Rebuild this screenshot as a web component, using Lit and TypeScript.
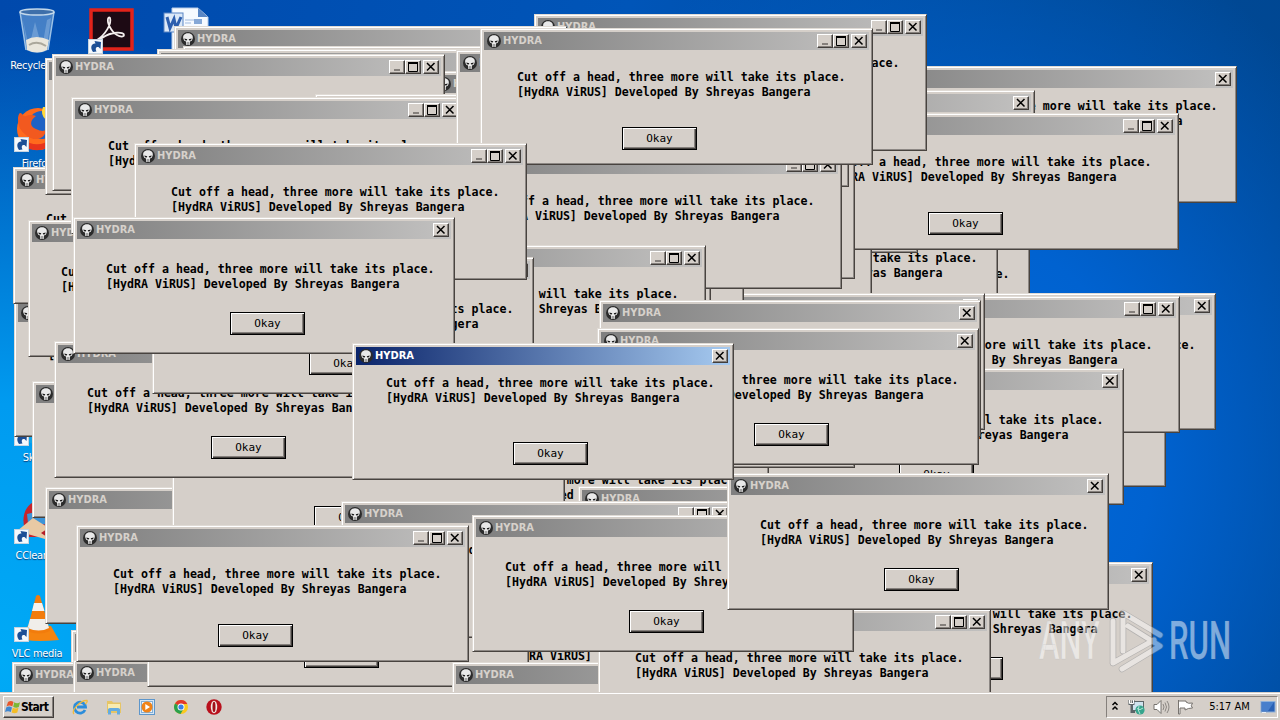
import { LitElement, css, html, svg } from "lit";
import { customElement, property } from "lit/decorators.js";

type Kind = "dialog" | "sizable" | "raised";
type Win = [number, number, Kind];

// back to front
const WINDOWS: Win[] = [
    [14, 300, "raised"],
    [13, 167, "dialog"],
    [28, 220, "dialog"],
    [32, 381, "dialog"],
    [45, 487, "dialog"],
    [71, 630, "dialog"],
    [855, 66, "raised"],
    [653, 90, "dialog"],
    [648, 222, "dialog"],
    [616, 206, "dialog"],
    [525, 116, "sizable"],
    [479, 170, "sizable"],
    [786, 113, "sizable"],
    [473, 142, "dialog"],
    [834, 293, "dialog"],
    [784, 350, "dialog"],
    [787, 296, "sizable"],
    [742, 368, "dialog"],
    [376, 431, "sizable"],
    [473, 331, "dialog"],
    [603, 293, "dialog"],
    [327, 180, "sizable"],
    [351, 170, "sizable"],
    [318, 190, "sizable"],
    [534, 14, "sizable"],
    [174, 26, "sizable"],
    [183, 46, "dialog"],
    [157, 49, "sizable"],
    [430, 71, "sizable"],
    [45, 58, "sizable"],
    [52, 54, "sizable"],
    [315, 94, "sizable"],
    [71, 97, "sizable"],
    [456, 50, "sizable"],
    [449, 152, "sizable"],
    [480, 28, "sizable"],
    [313, 245, "sizable"],
    [599, 300, "dialog"],
    [597, 328, "dialog"],
    [172, 407, "sizable"],
    [54, 341, "dialog"],
    [152, 257, "dialog"],
    [134, 143, "sizable"],
    [73, 217, "dialog"],
    [578, 486, "dialog"],
    [464, 592, "sizable"],
    [12, 662, "dialog"],
    [73, 660, "dialog"],
    [147, 550, "dialog"],
    [341, 501, "sizable"],
    [452, 662, "sizable"],
    [771, 562, "dialog"],
    [598, 609, "sizable"],
    [76, 525, "sizable"],
    [472, 515, "dialog"],
    [727, 473, "dialog"],
];

const arrow = svg`
    <g transform="translate(1 32)">
        <rect x=".5" y=".5" width="14" height="14" fill="#f4f8fc" stroke="#c5d3e0"/>
        <path d="M5 13 C1.500 8 4 4 7.500 4.500 L6.500 2 L13 3 L12.500 10 L10.500 8 C8 7.500 7 9.500 8.500 12.500 Z" fill="#1c4f96"/>
    </g>`;

const ICONS: Record<string, unknown> = {
    bin: svg`
        <g transform="translate(2 1)">
            <path d="M5 3 L11 42 Q23 48 33 42 L39 3 Z" fill="#5b92cf" fill-opacity=".75"/>
            <path d="M8 12 L14 40 L20 14 L27 40 L32 12 L36 10 L32 38 L12 40 Z" fill="#c4dcf2" fill-opacity=".3"/>
            <path d="M11 32 Q21 26 34 32 L32 42 Q22 47 12 42 Z" fill="#e9e6dc"/>
            <path d="M14 37 Q22 32 31 38" fill="none" stroke="#aaa79b" stroke-width="2"/>
            <path d="M5 4 L11 42 M39 4 L33 42" stroke="#9dc2e6" stroke-width="1.500"/>
            <ellipse cx="22" cy="4" rx="17" ry="3" fill="#3e6faa" stroke="#c3d8ea" stroke-width="1.500"/>
        </g>`,
    acrobat: svg`
        <rect x="4" y="3" width="41" height="39" fill="#1d0a14" stroke="#e2231a" stroke-width="3.500"/>
        <path d="M10 33 C18 28 25 17 23 11 C21 9 19 14 24 22 C29 30 37 31 37 28 C37 25 25 24 15 31 C11 34 9 35 10 33Z"
            fill="none" stroke="#f4eeee" stroke-width="1.800"/>${arrow}`,
    word: svg`
        <path d="M11 1 H37 L47 10 V44 H11 Z" fill="#f6faff" stroke="#b7cbe6"/>
        <path d="M37 1 V10 H47 Z" fill="#5a87c5"/>
        <path d="M24 13 H41 M24 16 H30 M24 20 H41" stroke="#9fb9de"/>
        <rect x="33" y="12" width="8" height="5" fill="#86a8d6"/>
        <rect x="3" y="6" width="19" height="19" fill="#dce9f8" stroke="#5984c4"/>
        <path d="M6 10 L9 21 L13 12 L15 21 L20 10" fill="none" stroke="#2e5fae" stroke-width="3"/>`,
    firefox: svg`
        <circle cx="25" cy="24" r="21" fill="#ff6a1d"/>
        <circle cx="29" cy="20" r="14" fill="#1f62c4"/>
        <path d="M30 2 C40 2 48 12 46 25 L33 15 Q27 10 30 2Z" fill="#ffd93a"/>
        <path d="M5 13 Q6 6 9 9 Q11 12 13 11 Q18 9 23 11 C16 16 17 22 23 24 Q31 28 33 24 C33 34 22 37 14 31 Q4 24 5 13Z" fill="#f2591f"/>
        <path d="M8 36 Q24 49 42 35" fill="none" stroke="#e8341c" stroke-width="6"/>${arrow}`,
    skype: svg`<circle cx="24" cy="24" r="21" fill="#12a5e8"/>${arrow}`,
    ccleaner: svg`
        <path d="M30 2 C10 4 6 24 15 40 H46 V2 Z" fill="#c7242c"/>
        <path d="M14 17 L40 11 V28 L15 26Z" fill="#3d94d8"/>
        <path d="M4 34 L20 21 L39 33 L32 42 Z" fill="#e8c9a4"/>
        <path d="M28 36 L40 28 V44 Z" fill="#b51d27"/>${arrow}`,
    vlc: svg`
        <path d="M9 36 L15 31 H38 L46 45 Q24 47 13 45Z" fill="#f58410"/>
        <path d="M23 1 Q25 -1 27 1 L37 36 Q26 41 14 36 Z" fill="#f27c0c"/>
        <path d="M21 8 H29 L31.500 16 H19 Z" fill="#f6f3ef"/>
        <path d="M17 24 H33.500 L36 33 Q26 38 14.500 33 Z" fill="#f0eeea"/>${arrow}`,
};

const SHORTCUTS: [string, string][][] = [
    [
        ["bin", "Recycle Bin"],
        ["firefox", "Firefox"],
        ["skype", ""],
        ["skype", ""],
        ["skype", "Skype"],
        ["ccleaner", "CCleaner"],
        ["vlc", "VLC media"],
    ],
    [["acrobat", ""]],
    [["word", ""]],
];

@customElement("hydra-window")
export class HydraWindow extends LitElement {

    @property({ reflect: true }) kind: Kind = "dialog";
    @property({ type: Boolean, reflect: true }) active = false;

    static styles = css`
        :host{
            --text-x: 33px;
            --text-y: 23px;
            --button-x: 157px;
            --button-gap: 20px;
            display: block;
            box-sizing: border-box;
            width: 382px;
            height: 137px;
            padding: 3px;
            background: #d5cfc9;
            border: 1px solid;
            border-color: #e0dbd5 #48433f #48433f #e0dbd5;
            box-shadow: inset 1px 1px #fff, inset -1px -1px #8d8884;
            color: #000;
        }
        :host([kind="sizable"]){
            --text-x: 37px;
            --text-y: 20px;
            --button-x: 142px;
            --button-gap: 27px;
            width: 393px;
        }
        :host([kind="raised"]){
            --text-x: 34px;
            --text-y: 11px;
            --button-x: 161px;
            --button-gap: 36px;
        }
        .title{
            display: flex;
            align-items: center;
            height: 18px;
            padding: 0 2px 0 3px;
            background: linear-gradient(90deg, #7f7f7f, #c2c1c0);
            color: #d6d1cb;
            font: bold 11px/18px "DejaVu Sans Condensed", "DejaVu Sans", sans-serif;
            font-stretch: condensed;
        }
        :host([active]) .title{
            background: linear-gradient(90deg, #0a246a, #a6caf0);
            color: #fff;
        }
        .title svg{
            width: 14px;
            height: 14px;
            margin-right: 2px;
        }
        .name{
            flex: 1;
        }
        .box{
            box-sizing: border-box;
            display: flex;
            width: 16px;
            height: 14px;
            background: #d5cfc9;
            border: 1px solid;
            border-color: #fff #423e3b #423e3b #fff;
            box-shadow: inset -1px -1px #85807c;
        }
        .box svg{
            width: 14px;
            height: 12px;
            margin: 0;
        }
        .close{
            margin-left: 2px;
        }
        .text{
            margin: var(--text-y) 0 0 calc(var(--text-x) - 4px);
            font: bold 11.62px/15px "DejaVu Sans Mono", "Liberation Mono", monospace;
            white-space: pre;
        }
        .okay{
            box-sizing: border-box;
            display: block;
            width: 75px;
            height: 23px;
            margin: var(--button-gap) 0 0 calc(var(--button-x) - 4px);
            padding: 0;
            background: #d5cfc9;
            border: 1px solid #000;
            border-radius: 0;
            box-shadow: inset 1px 1px #fff, inset -1px -1px #423e3b, inset -2px -2px #85807c;
            color: #000;
            font: 11px/19px "DejaVu Sans Mono", "Liberation Mono", monospace;
        }
    `;

    render() {
        return html`
            <div class="title">
                <svg viewBox="0 0 14 14">
                    <circle cx="7" cy="7" r="7" fill="#2b2b2b"/>
                    <path d="M7 1.200 C3.300 1.200 1.800 3.600 2.200 6.200 L3.200 8.800 L5 9.400 L5.200 13 H8.800 L9 9.400 L10.800 8.800 L11.800 6.200 C12.200 3.600 10.700 1.200 7 1.200Z" fill="#e9e9e9"/>
                    <path d="M3.300 6.400 L6.300 7.200 L5.700 8.500 L4 8.200Z M10.700 6.400 L7.700 7.200 L8.300 8.500 L10 8.200Z" fill="#1a1a1a"/>
                    <path d="M6.300 10 V13 M7.700 10 V13" stroke="#555" stroke-width=".6"/>
                </svg>
                <span class="name">HYDRA</span>
                ${this.kind === "sizable" ? html`
                    <span class="box"><svg viewBox="0 0 14 12"><path d="M4 9H10" stroke="#85807c" stroke-width="2"/></svg></span>
                    <span class="box"><svg viewBox="0 0 14 12"><path d="M2.500 2V10.500H11.500V2" fill="none" stroke="#000"/><path d="M2 2H12" stroke="#000" stroke-width="2"/></svg></span>
                ` : ""}
                <span class="box close"><svg viewBox="0 0 14 12"><path d="M3 2L10.500 9.500M10.500 2L3 9.500" stroke="#000" stroke-width="1.500"/></svg></span>
            </div>
            <div class="text">Cut off a head, three more will take its place.
[HydRA ViRUS] Developed By Shreyas Bangera</div>
            <button class="okay">Okay</button>
        `;
    }
}

@customElement("task-bar")
export class TaskBar extends LitElement {

    static styles = css`
        :host{
            box-sizing: border-box;
            display: flex;
            align-items: center;
            height: 28px;
            padding: 2px 2px 1px 3px;
            background: #d5cfc9;
            box-shadow: inset 0 1px #d5cfc9, inset 0 2px #fff;
            font: 11px/20px "DejaVu Sans Condensed", "DejaVu Sans", sans-serif;
            font-stretch: condensed;
            color: #000;
        }
        .start{
            box-sizing: border-box;
            display: flex;
            align-items: center;
            width: 51px;
            height: 22px;
            padding-left: 1px;
            border: 1px solid;
            border-color: #fff #423e3b #423e3b #fff;
            box-shadow: inset -1px -1px #85807c;
            font-size: 12px;
            font-weight: bold;
            letter-spacing: -.7px;
        }
        .start svg{
            width: 16px;
            height: 16px;
        }
        .quick{
            display: flex;
            flex: 1;
            gap: 17.500px;
            margin-left: 18px;
        }
        .quick svg{
            width: 16px;
            height: 16px;
        }
        .tray{
            box-sizing: border-box;
            display: flex;
            align-items: center;
            width: 172px;
            height: 22px;
            padding: 0 1px 0 4px;
            border: 1px solid;
            border-color: #85807c #fff #fff #85807c;
        }
        .tray svg{
            height: 16px;
            margin-right: 7px;
        }
        .tray .show{
            margin-right: 0;
        }
        .clock{
            flex: 1;
            padding-right: 2px;
            text-align: center;
            white-space: nowrap;
        }
    `;

    render() {
        return html`
            <div class="start">
                <svg viewBox="0 0 16 16">
                    <path d="M3 3Q6 1 8.500 3L7.300 7.500Q4.500 5.700 1.500 7.500Z" fill="#e8562a"/>
                    <path d="M9.300 3.300Q12 5 15 3.300L13.800 8Q11 9.500 8.200 7.800Z" fill="#7cb733"/>
                    <path d="M1.200 8.400Q4 6.800 7 8.400L5.800 13Q3 11.500 0 13Z" fill="#3f87d0"/>
                    <path d="M7.800 8.800Q10.500 10.300 13.500 8.800L12.300 13.500Q9.500 15 6.600 13.400Z" fill="#f4bd26"/>
                </svg>
                Start
            </div>
            <div class="quick">
                <svg viewBox="0 0 16 16">
                    <path d="M13 11A5.500 5.500 0 1 1 13.500 8H5" fill="none" stroke="#2b8ddb" stroke-width="2.800"/>
                    <path d="M2 15C-1 12 8 1 15 1.500C16 3 13 5 13 5" fill="none" stroke="#f0bb3c" stroke-width="1.300"/>
                </svg>
                <svg viewBox="0 0 16 16">
                    <path d="M1 2H6L7 3.500H15V14H1Z" fill="#e6c566"/>
                    <path d="M2 5H14V10H2Z" fill="#f8ebb0"/>
                    <path d="M2 15.500V10.500Q2 9 4 9H12Q14 9 14 10.500V15.500H11V12H5V15.500Z" fill="#64abe0"/>
                </svg>
                <svg viewBox="0 0 16 16">
                    <rect x=".5" y=".5" width="15" height="15" fill="#d5e6f4" stroke="#5d96cb"/>
                    <rect x="2.500" y="2.500" width="11" height="11" fill="#f3f7fb" stroke="#83afd6"/>
                    <circle cx="8" cy="8" r="5.500" fill="#f08318"/>
                    <path d="M6.300 5V11L11 8Z" fill="#fff"/>
                </svg>
                <svg viewBox="0 0 16 16">
                    <circle cx="8" cy="8" r="7" fill="#fbc91f"/>
                    <path d="M8 8L2 4.500A7 7 0 0 1 14.300 5H8Z" fill="#e2382c"/>
                    <path d="M8 8L2 4.400A7 7 0 0 0 7.500 15L10.500 10Z" fill="#2aa04c"/>
                    <circle cx="8" cy="8" r="3.500" fill="#fff"/>
                    <circle cx="8" cy="8" r="2.600" fill="#3b7fe6"/>
                </svg>
                <svg viewBox="0 0 16 16">
                    <circle cx="8" cy="8" r="7.700" fill="#b9101c"/>
                    <ellipse cx="8" cy="8" rx="3.200" ry="6.200" fill="#f1e6e3"/>
                    <ellipse cx="8" cy="8" rx="1.500" ry="5.200" fill="#a00e18"/>
                </svg>
            </div>
            <div class="tray">
                <svg width="10" viewBox="0 0 10 16"><path d="M1.500 6L4 3.500L6.500 6M1.500 10.500L4 8L6.500 10.500" fill="none" stroke="#000" stroke-width="1.500"/></svg>
                <svg width="18" viewBox="0 0 18 16">
                    <rect x="4.500" y="2.500" width="11" height="9" fill="#cfe3ee" stroke="#5c6468"/>
                    <path d="M1.500 1V5H5.500V1M3.500 5V13H7" fill="none" stroke="#5c6468" stroke-width="2"/>
                    <path d="M1.500 1V4.500H5.500V1" fill="none" stroke="#fff"/>
                    <circle cx="12" cy="11" r="4.600" fill="#36a58d"/>
                    <path d="M9 9.500Q12 12 15 9M11 7Q9 11 12 15" fill="none" stroke="#b4e3d6"/>
                </svg>
                <svg width="17" viewBox="0 0 17 16">
                    <path d="M1 5.500H4L8 1.500V14.500L4 10.500H1Z" fill="#fff" stroke="#77736f"/>
                    <path d="M10 5Q12 8 10 11M12 3.500Q15 8 12 12.500M14 2Q18 8 14 14" fill="none" stroke="#8b8783"/>
                </svg>
                <svg width="17" viewBox="0 0 17 16">
                    <path d="M1.500 1V15H3V9H8V11Q11 9 15.500 9Q13 7 15.500 4Q11 5 9 3V2H1.500Z" fill="#fff" stroke="#77736f"/>
                </svg>
                <span class="clock">5:17 AM</span>
                <svg class="show" width="16" viewBox="0 0 16 16">
                    <rect x="1" y="2.500" width="14" height="10.500" fill="#2a61b5" stroke="#8fb1d9"/>
                    <path d="M2 3H14L8 12H2Z" fill="#5c92dc" fill-opacity=".6"/>
                    <path d="M2 13.500H6" stroke="#e8eef5"/>
                </svg>
            </div>
        `;
    }
}

@customElement("app-root")
export class AppRoot extends LitElement {

    static styles = css`
        :host{
            display: flex;
            flex-direction: column;
            width: 1280px;
            height: 720px;
            overflow: hidden;
        }
        .desktop{
            position: relative;
            flex: 1;
            display: flex;
            align-items: flex-start;
            overflow: hidden;
            background:
                radial-gradient(ellipse 520px 640px at 0 660px, #00aaf6 0, #009bf0 40%, transparent 100%),
                radial-gradient(ellipse 480px 560px at 960px 460px, #006adb 0, #0062d0 40%, transparent 100%),
                linear-gradient(100deg, #0049ac 0, #0055b8 45%, #004a98 75%, #004690 100%);
        }
        .column{
            display: flex;
            flex-direction: column;
            width: 74px;
            padding-top: 7px;
        }
        .shortcut{
            display: flex;
            flex-direction: column;
            align-items: center;
            height: 98px;
            color: #fff;
            font: 11px/13px "DejaVu Sans Condensed", "DejaVu Sans", sans-serif;
            font-stretch: condensed;
            letter-spacing: -.3px;
            white-space: nowrap;
            text-shadow: 0 1px 1px #0a3c78;
        }
        .shortcut svg{
            width: 48px;
            height: 48px;
            margin-bottom: 4px;
            overflow: visible;
        }
        hydra-window{
            position: absolute;
        }
        .watermark{
            position: absolute;
            left: 1036px;
            top: 604px;
            width: 200px;
            height: 74px;
        }
    `;

    render() {
        return html`
            <div class="desktop">
                ${SHORTCUTS.map(column => html`
                    <div class="column">
                        ${column.map(([icon, label]) => html`
                            <div class="shortcut">
                                <svg viewBox="0 0 48 48">${ICONS[icon]}</svg>
                                <span>${label}</span>
                            </div>
                        `)}
                    </div>
                `)}
                ${WINDOWS.map(([x, y, kind]) => html`
                    <hydra-window kind=${kind} style="left:${x}px;top:${y}px"></hydra-window>
                `)}
                <hydra-window kind="raised" active style="left:352px;top:343px"></hydra-window>
                <svg class="watermark" viewBox="0 0 200 74">
                    <g fill="#fff" fill-opacity=".5" stroke="#8d96a0" stroke-opacity=".25" stroke-width=".6" font-family="Roboto, sans-serif" font-weight="500" font-size="53">
                        <text x="3" y="55" textLength="61" lengthAdjust="spacingAndGlyphs">ANY</text>
                        <text x="133" y="55" textLength="62" lengthAdjust="spacingAndGlyphs">RUN</text>
                    </g>
                    <g fill="none" stroke-linejoin="round" stroke-linecap="round" opacity=".45">
                        <path d="M77 59V17M87 47V9L124 31M92 22L124 42L86 65M77 59L118 36" stroke="#8d8f94" stroke-width="6.500"/>
                        <path d="M77 59V17M87 47V9L124 31M92 22L124 42L86 65M77 59L118 36" stroke="#fff" stroke-width="5"/>
                    </g>
                </svg>
            </div>
            <task-bar></task-bar>
        `;
    }
}
